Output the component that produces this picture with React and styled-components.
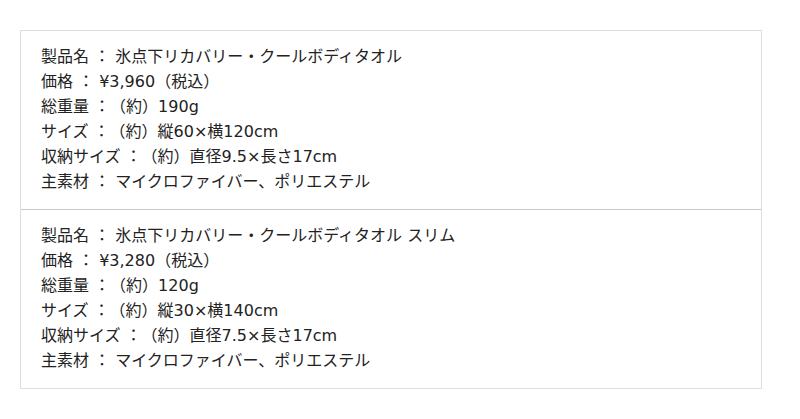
import React from "react";
import styled, { createGlobalStyle } from "styled-components";

const GlobalStyle = createGlobalStyle`
  html, body {
    margin: 0;
    padding: 0;
    background: #fff;
  }
  body {
    font-family: "DejaVu Sans", "Noto Sans CJK JP", sans-serif;
    color: #222;
  }
`;

const Page = styled.div`
  width: 800px;
  height: 419px;
  padding: 30px 38px 0 20px;
  box-sizing: border-box;
`;

const SpecBox = styled.div`
  border: 1px solid #dedede;
`;

const Section = styled.div`
  padding: 13px 20px 15px;
  & + & {
    border-top: 1px solid #c8c8c8;
    padding-top: 13px;
  }
`;

const Line = styled.p`
  margin: 0;
  font-size: 16px;
  line-height: 25px;
  white-space: nowrap;
  text-spacing-trim: space-all;
`;

const products = [
  [
    "製品名 ： 氷点下リカバリー・クールボディタオル",
    "価格 ： ¥3,960（税込）",
    "総重量 ：（約）190g",
    "サイズ ：（約）縦60×横120cm",
    "収納サイズ ：（約）直径9.5×長さ17cm",
    "主素材 ： マイクロファイバー、ポリエステル",
  ],
  [
    "製品名 ： 氷点下リカバリー・クールボディタオル スリム",
    "価格 ： ¥3,280（税込）",
    "総重量 ：（約）120g",
    "サイズ ：（約）縦30×横140cm",
    "収納サイズ ：（約）直径7.5×長さ17cm",
    "主素材 ： マイクロファイバー、ポリエステル",
  ],
];

export default function App() {
  return (
    <>
      <GlobalStyle />
      <Page>
        <SpecBox>
          {products.map((lines, i) => (
            <Section key={i}>
              {lines.map((t, j) => (
                <Line key={j}>{t}</Line>
              ))}
            </Section>
          ))}
        </SpecBox>
      </Page>
    </>
  );
}
